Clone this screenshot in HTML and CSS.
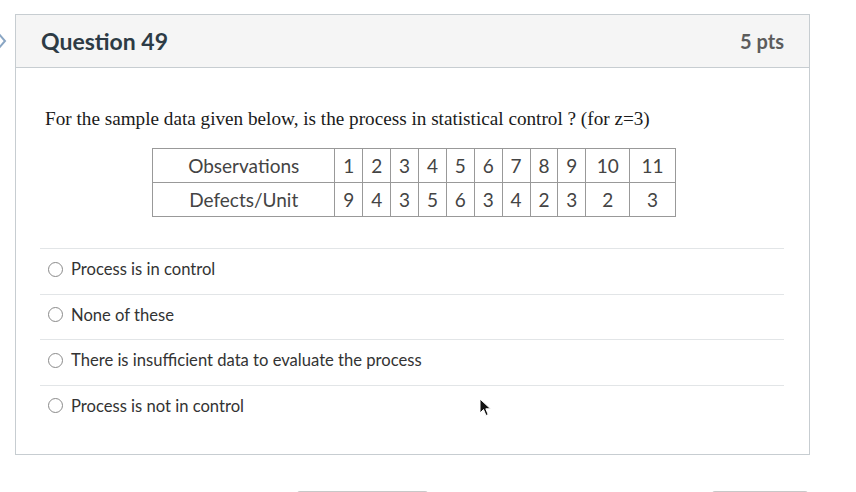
FILE: index.html
```html
<!DOCTYPE html>
<html>
<head>
<meta charset="utf-8">
<link rel="stylesheet" href="styles.css">
</head>
<body>
<svg class="nav-chevron" width="8" height="18" viewBox="0 0 8 18"><path d="M-2 1 L5 9 L-2 17" fill="none" stroke="#8aa6c4" stroke-width="2"/></svg>
<div class="card">
  <div class="card-header">
    <h2 class="title">Question 49</h2>
    <span class="pts">5 pts</span>
  </div>
  <div class="card-body">
    <p class="question">For the sample data given below, is the process in statistical control ? (for z=3)</p>
    <table class="data">
      <tr>
        <td class="label">Observations</td>
        <td>1</td><td>2</td><td>3</td><td>4</td><td>5</td><td>6</td><td>7</td><td>8</td><td>9</td><td class="w10">10</td><td class="w11">11</td>
      </tr>
      <tr>
        <td class="label">Defects/Unit</td>
        <td>9</td><td>4</td><td>3</td><td>5</td><td>6</td><td>3</td><td>4</td><td>2</td><td>3</td><td class="w10">2</td><td class="w11">3</td>
      </tr>
    </table>
    <div class="answers">
      <label class="answer"><span class="radio"></span>Process is in control</label>
      <label class="answer"><span class="radio"></span>None of these</label>
      <label class="answer"><span class="radio"></span>There is insufficient data to evaluate the process</label>
      <label class="answer"><span class="radio"></span>Process is not in control</label>
    </div>
  </div>
</div>
<div class="footer">
  <div class="btn btn-prev"></div>
  <div class="btn btn-next"></div>
</div>
<svg class="cursor" width="14" height="20" viewBox="0 0 14 20"><path d="M1 1 L1 15 L4.5 11.5 L7 17.5 L9.2 16.6 L6.8 10.8 L11.5 10.8 Z" fill="#111" stroke="#fff" stroke-width="1"/></svg>
</body>
</html>
```
FILE: styles.css
```css
html, body {
  margin: 0;
  padding: 0;
  background: #ffffff;
  height: 492px;
  overflow: hidden;
}
body {
  position: relative;
  font-family: Lato, "Open Sans", sans-serif;
  padding-top: 14px;
  box-sizing: border-box;
}
.nav-chevron {
  position: absolute;
  left: 0;
  top: 32px;
}
.card {
  margin-left: 15px;
  width: 795px;
  box-sizing: border-box;
  border: 1px solid #c7cdd1;
}
.card-header {
  height: 53px;
  box-sizing: border-box;
  background: #f5f5f5;
  border-bottom: 1px solid #c7cdd1;
  display: flex;
  align-items: center;
  justify-content: space-between;
  padding: 0 25px 0 25px;
}
.title {
  margin: 0;
  font-size: 23px;
  font-weight: 700;
  color: #2d3b45;
}
.pts {
  font-size: 20px;
  font-weight: 700;
  color: #5c5c5c;
}
.card-body {
  padding: 40px 25px 24px 24px;
}
.question {
  margin: 0 0 18px 5px;
  font-family: "Liberation Serif", "Times New Roman", serif;
  font-size: 19.2px;
  line-height: 22px;
  color: #1a1a1a;
}
.data {
  border-collapse: collapse;
  margin: 0 auto;
  width: 524px;
  border: 1px solid #555;
  font-size: 19px;
  color: #444;
  position: relative;
  left: 2px;
}
.data td {
  border: 1px solid #999;
  height: 33px;
  padding: 0;
  text-align: center;
  width: 27px;
}
.data td.label {
  width: 182px;
}
.data td.w10 {
  width: 43px;
}
.data td.w11 {
  width: 45px;
}
.answers {
  margin-top: 31px;
}
.answer {
  display: flex;
  align-items: center;
  height: 45.5px;
  box-sizing: border-box;
  border-top: 1px solid #e2e5e7;
  font-size: 16.6px;
  color: #333;
  padding-left: 8px;
  padding-bottom: 4px;
}
.radio {
  width: 15px;
  height: 15px;
  border: 1px solid #8a8a8a;
  border-radius: 50%;
  box-sizing: border-box;
  margin-right: 8px;
}
.footer {
  display: flex;
  margin-top: 36px;
  padding-left: 297px;
}
.btn {
  height: 10px;
  border-top: 1.5px solid #c8c8c8;
  border-radius: 3px 3px 0 0;
}
.btn-prev {
  width: 131px;
}
.btn-next {
  width: 96px;
  margin-left: 284px;
}
.cursor {
  position: absolute;
  left: 479px;
  top: 398px;
}
```
